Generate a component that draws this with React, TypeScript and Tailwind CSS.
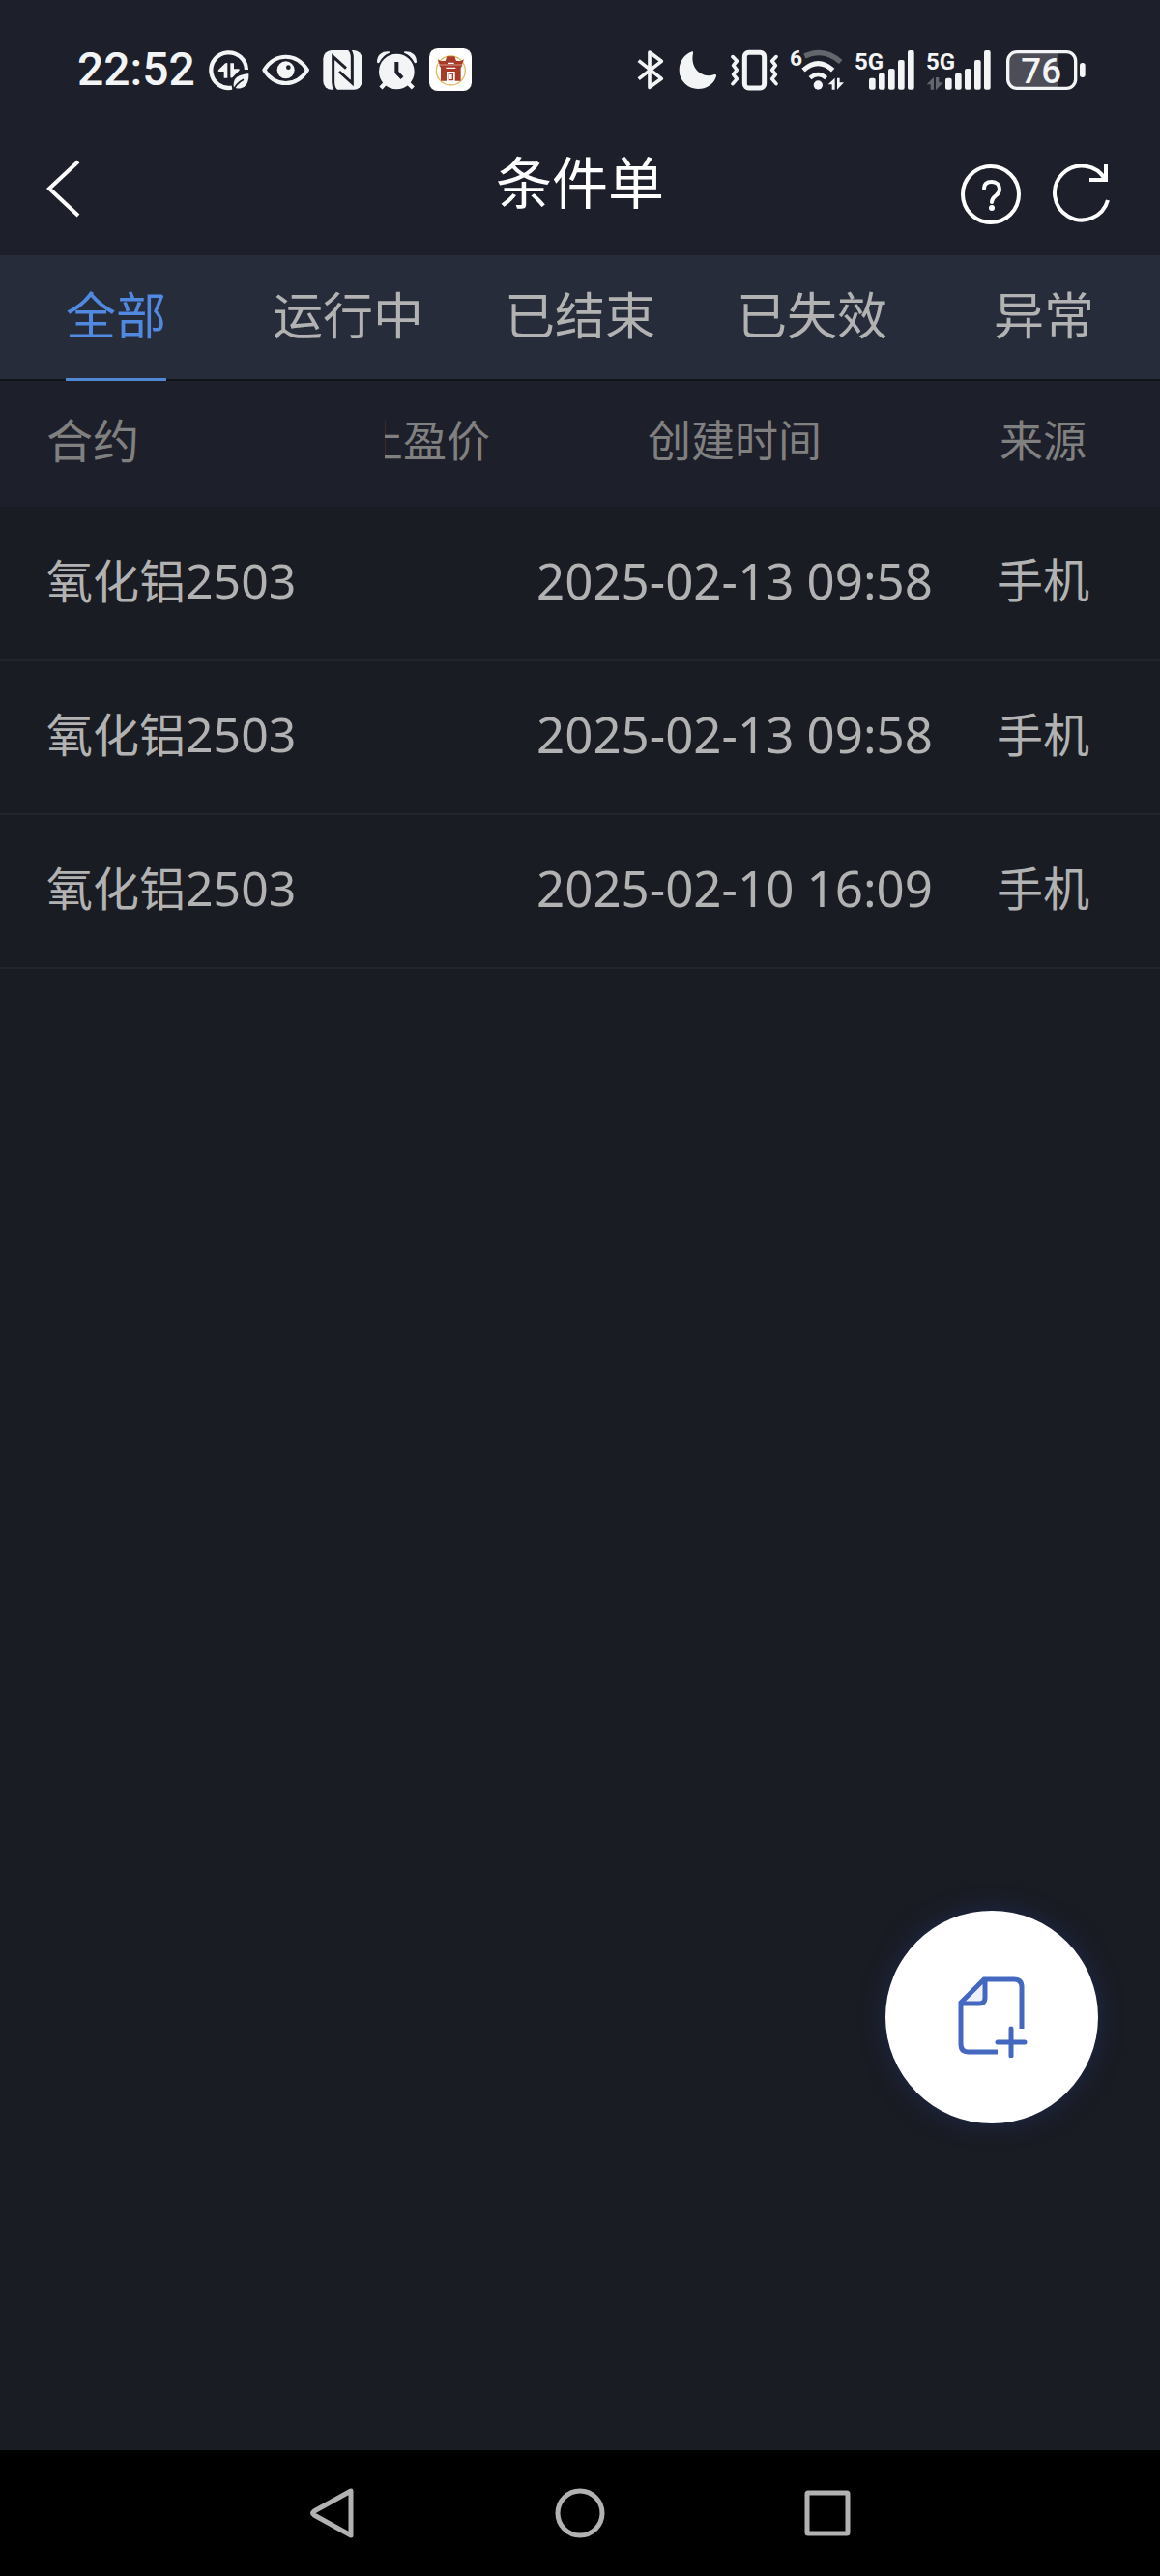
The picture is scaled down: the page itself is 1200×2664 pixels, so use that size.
import { useState } from "react";

type Order = {
  id: number;
  name: string;
  code: string;
  takeProfit: string;
  createdAt: string;
  source: string;
};

const TABS = ["全部", "运行中", "已结束", "已失效", "异常"];

const ORDERS: Order[] = [
  { id: 1, name: "氧化铝", code: "2503", takeProfit: "", createdAt: "2025-02-13 09:58", source: "手机" },
  { id: 2, name: "氧化铝", code: "2503", takeProfit: "", createdAt: "2025-02-13 09:58", source: "手机" },
  { id: 3, name: "氧化铝", code: "2503", takeProfit: "", createdAt: "2025-02-10 16:09", source: "手机" },
];

const INK = "#f3f4f5";
const BAR = "#1d1f2a";
const DIM = "#64666d";

function DataSaverIcon() {
  return (
    <svg className="h-11 w-[42px]" viewBox="0 0 126 132" fill="none" aria-hidden="true">
      <path d="M117 66A55 55 0 1 0 72 122" stroke={INK} strokeWidth="13" />
      <path d="M58 46V92H47V72H31Q27 70 30 67L50 47Q54 44 58 46Z" fill={INK} />
      <path d="M67 46H78V64H94Q97 66 94 69L74 90Q68 94 67 88Z" fill={INK} />
      <path d="M78 122C72 92 92 80 124 79C126 108 112 128 86 124Z" fill={INK} />
      <path d="M74 132L86 114Q94 104 108 97" stroke={BAR} strokeWidth="5" />
    </svg>
  );
}

function EyeIcon() {
  return (
    <svg className="h-11 w-[52px]" viewBox="0 0 156 132" fill="none" aria-hidden="true">
      <path
        d="M10 67C28 38 52 26 77 26S126 38 144 67C126 96 102 108 77 108S28 96 10 67Z"
        stroke={INK}
        strokeWidth="12"
        strokeLinejoin="round"
      />
      <circle cx="77" cy="67" r="27" fill={INK} />
      <circle cx="85" cy="59" r="7" fill={BAR} />
    </svg>
  );
}

function NfcIcon() {
  return (
    <svg className="h-11 w-[42px]" viewBox="0 0 126 132" fill="none" aria-hidden="true">
      <rect x="1" y="6" width="121" height="122" rx="26" fill={INK} />
      <path d="M42 132Q32 122 32 106V26L72 62" stroke={BAR} strokeWidth="9" />
      <path d="M81 2Q91 12 91 28V108L51 72" stroke={BAR} strokeWidth="9" />
    </svg>
  );
}

function AlarmIcon() {
  return (
    <svg className="h-11 w-11" viewBox="0 0 132 132" fill="none" aria-hidden="true">
      <circle cx="67" cy="72" r="55" fill={INK} />
      <path d="M8 42C8 22 22 10 44 12Q22 20 12 42Q10 46 8 42Z" fill={INK} stroke={INK} strokeWidth="4" />
      <path d="M127 42C127 22 113 10 91 12Q113 20 123 42Q125 46 127 42Z" fill={INK} stroke={INK} strokeWidth="4" />
      <path d="M32 108L18 123M103 108L118 123" stroke={INK} strokeWidth="13" />
      <path d="M67 42V74L84 92" stroke={BAR} strokeWidth="12" />
    </svg>
  );
}

function TempleIcon() {
  return (
    <svg className="h-11 w-11" viewBox="0 0 132 132" fill="none" aria-hidden="true">
      <rect width="132" height="132" rx="26" fill="#fff" />
      <circle cx="67" cy="69" r="45" stroke="#e3b95a" strokeWidth="4" />
      <path d="M26 34L36 39H50L55 25H79L84 39H98L108 34L102 50H32Z" fill="#a83a28" />
      <path d="M30 52H104L98 60V101H80V72H54V101H36V60Z" fill="#a83a28" />
      <path d="M57 46H77M52 61H82" stroke="#fff" strokeWidth="4" />
      <path d="M61 98V78H73V98Z" stroke="#a83a28" strokeWidth="4" />
    </svg>
  );
}

function BluetoothIcon() {
  return (
    <svg className="h-11 w-8" viewBox="0 0 96 132" fill="none" aria-hidden="true">
      <path
        d="M5 38L76 94L39 121V12L76 40L5 95"
        stroke={INK}
        strokeWidth="11"
        strokeLinejoin="round"
      />
    </svg>
  );
}

function MoonIcon() {
  return (
    <svg className="h-11 w-[42px]" viewBox="0 0 126 132" aria-hidden="true">
      <path
        d="M45 10C20 18 5 42 5 68A58 58 0 0 0 63 126C89 126 114 110 120 86C121 80 116 80 112 82C74 94 38 62 48 16C49 11 48 9 45 10Z"
        fill={INK}
      />
    </svg>
  );
}

function VibrateIcon() {
  return (
    <svg className="h-11 w-[54px]" viewBox="0 0 162 132" fill="none" aria-hidden="true">
      <rect x="52" y="13" width="61" height="110" rx="13" stroke={INK} strokeWidth="15" />
      <path
        d="M15 26L28 39L17 53L28 67L17 81L28 95L15 110"
        stroke={INK}
        strokeWidth="11"
        strokeLinecap="round"
        strokeLinejoin="round"
      />
      <path
        d="M150 26L137 39L148 53L137 67L148 81L137 95L150 110"
        stroke={INK}
        strokeWidth="11"
        strokeLinecap="round"
        strokeLinejoin="round"
      />
    </svg>
  );
}

function WifiIcon() {
  return (
    <svg className="h-11 w-[57px] overflow-visible" viewBox="0 0 171 132" fill="none" aria-hidden="true">
      <text x="0" y="54" fontSize="68" fontWeight="700" fontFamily="Roboto, sans-serif" fill={INK}>
        6
      </text>
      <path d="M46 24Q106 -4 158 42" stroke={DIM} strokeWidth="16" />
      <path d="M42 68Q88 26 134 68" stroke={INK} strokeWidth="15" />
      <path d="M63 92Q88 70 113 92" stroke={INK} strokeWidth="13" />
      <circle cx="88" cy="114" r="14" fill={INK} />
      <path d="M140 92V128H131V112H119Z" fill={INK} />
      <path d="M147 92H155V106H168L147 128Z" fill={INK} />
    </svg>
  );
}

function SignalBars({ x }: { x: number }) {
  return (
    <>
      <rect x={x} y="92" width="20" height="36" rx="6" fill={INK} />
      <rect x={x + 30} y="77" width="20" height="51" rx="6" fill={INK} />
      <rect x={x + 60} y="63" width="20" height="65" rx="6" fill={INK} />
      <rect x={x + 90} y="36" width="20" height="92" rx="6" fill={INK} />
      <rect x={x + 120} y="6" width="20" height="122" rx="6" fill={INK} />
    </>
  );
}

function SignalIcon() {
  return (
    <svg className="h-11 w-16 overflow-visible" viewBox="0 0 192 132" aria-hidden="true">
      <text x="0" y="66" fontSize="72" fontWeight="700" fontFamily="Roboto, sans-serif" fill={INK}>
        5G
      </text>
      <SignalBars x={45} />
    </svg>
  );
}

function IdleSignalIcon() {
  return (
    <svg className="h-11 w-[73px] overflow-visible" viewBox="0 0 219 132" aria-hidden="true">
      <text x="0" y="66" fontSize="72" fontWeight="700" fontFamily="Roboto, sans-serif" fill={INK}>
        5G
      </text>
      <path d="M24 90V128H14V112H2Z" fill={DIM} />
      <path d="M30 90H40V106H53L30 130Z" fill={DIM} />
      <SignalBars x={60} />
    </svg>
  );
}

function BatteryIcon() {
  return (
    <svg className="h-11 w-[82px]" viewBox="0 0 246 132" fill="none" aria-hidden="true">
      <path d="M159 14V120H32Q8 120 8 96V38Q8 14 32 14Z" fill="#4c4d56" />
      <rect x="5" y="11" width="210" height="113" rx="28" stroke={INK} strokeWidth="10" />
      <rect x="228" y="45" width="17" height="45" rx="8" fill={INK} />
      <text x="46" y="107" fontSize="110" fontWeight="500" fontFamily="Roboto, sans-serif" fill={INK}>
        76
      </text>
    </svg>
  );
}

function StatusBar() {
  return (
    <div className="flex h-[130px] items-center justify-between pt-[14px] pr-[77px] pl-20">
      <div className="flex items-center gap-3">
        <span className="w-[124px] font-[Roboto,sans-serif] text-[48px] leading-none font-medium text-[#f3f4f5]">
          22:52
        </span>
        <DataSaverIcon />
        <EyeIcon />
        <NfcIcon />
        <AlarmIcon />
        <TempleIcon />
      </div>
      <div className="flex items-center gap-[10px]">
        <BluetoothIcon />
        <MoonIcon />
        <VibrateIcon />
        <WifiIcon />
        <SignalIcon />
        <IdleSignalIcon />
        <BatteryIcon />
      </div>
    </div>
  );
}

function TitleBar() {
  return (
    <header className="grid h-[134px] grid-cols-[1fr_auto_1fr] items-center">
      <div className="pb-1 pl-12">
        <button type="button" aria-label="返回" className="block">
          <svg className="h-[60px] w-9" viewBox="0 0 36 60" fill="none" aria-hidden="true">
            <path d="M33 2L3 30L33 58" stroke="#fff" strokeWidth="4" />
          </svg>
        </button>
      </div>
      <h1 className="pb-4 text-[58px] leading-none text-white">条件单</h1>
      <div className="flex justify-end gap-8 pt-2 pr-[52px]">
        <button type="button" aria-label="帮助">
          <svg className="h-[62px] w-[62px]" viewBox="0 0 62 62" fill="none" aria-hidden="true">
            <circle cx="31" cy="31" r="29" stroke="#fff" strokeWidth="4" />
            <path
              d="M24 25C24 20 27 18 32 18S40 21 40 26C40 33 32 32 32 39"
              stroke="#fff"
              strokeWidth="4"
              strokeLinecap="round"
            />
            <circle cx="32" cy="45" r="3" fill="#fff" />
          </svg>
        </button>
        <button type="button" aria-label="刷新">
          <svg className="h-[62px] w-[60px]" viewBox="0 0 60 62" fill="none" aria-hidden="true">
            <path d="M55 15A28 28 0 1 0 58 37" stroke="#fff" strokeWidth="4" />
            <path d="M56 0V16H39" stroke="#fff" strokeWidth="4" />
          </svg>
        </button>
      </div>
    </header>
  );
}

function Tabs() {
  const [active, setActive] = useState(0);

  return (
    <nav className="grid h-[130px] grid-cols-5 border-b-2 border-[#11131a] bg-[#262c3a]" aria-label="条件单状态">
      {TABS.map((tab, index) => (
        <button
          key={tab}
          type="button"
          onClick={() => setActive(index)}
          className={`flex justify-center text-[52px] leading-[124px] ${index === active ? "text-[#5188e0]" : "text-[#b2b2b2]"}`}
        >
          <span className={`h-[130px] ${index === active ? "border-b-3 border-[#5188d4]" : ""}`}>{tab}</span>
        </button>
      ))}
    </nav>
  );
}

function OrderTable() {
  return (
    <table className="w-full table-fixed text-center whitespace-nowrap">
      <colgroup>
        <col className="w-[398px]" />
        <col className="w-[152px]" />
        <col className="w-[420px]" />
        <col />
      </colgroup>
      <thead className="bg-[#1d1f2a] text-[45px] text-[#808080]">
        <tr className="h-[130px]">
          <th className="pb-1.5 pl-12 text-left text-[48px] font-normal">合约</th>
          {/* Scrolled column, its first character is partly hidden */}
          <th className="pb-1.5 font-normal">
            <div className="flex w-[109px] justify-end overflow-hidden">
              <span>止盈价</span>
            </div>
          </th>
          <th className="pb-1.5 font-normal">创建时间</th>
          <th className="pr-3 pb-1.5 font-normal">来源</th>
        </tr>
      </thead>
      <tbody className="text-[48px] text-[#b2b2b2]">
        {ORDERS.map((order) => (
          <tr key={order.id} className="h-[159px] border-b-2 border-[#22252e]">
            <td className="pb-1.5 pl-12 text-left">
              {order.name}
              <span className="text-[50px]">{order.code}</span>
            </td>
            <td>{order.takeProfit}</td>
            <td className="pb-1.5 text-[51px]">{order.createdAt}</td>
            <td className="pr-3 pb-1.5">{order.source}</td>
          </tr>
        ))}
      </tbody>
    </table>
  );
}

function AddButton() {
  return (
    <button
      type="button"
      aria-label="新建条件单"
      className="absolute right-16 bottom-[338px] flex h-[220px] w-[220px] items-center justify-center rounded-full bg-white shadow-[0_0_24px_#1d2a4a]"
    >
      <svg className="h-[84px] w-[74px]" viewBox="0 0 74 84" fill="none" aria-hidden="true">
        <path d="M5 27L29 3V22Q29 27 24 27Z" fill="#eef1f9" />
        <path
          d="M68 54V11Q68 3 60 3H29L5 27V70Q5 78 13 78H43"
          stroke="#4468c0"
          strokeWidth="5"
        />
        <path d="M30 4V22Q30 28 24 28H5" stroke="#4468c0" strokeWidth="5" />
        <path d="M57 54V82M43 68H71" stroke="#4468c0" strokeWidth="5" strokeLinecap="round" />
      </svg>
    </button>
  );
}

function SystemNav() {
  return (
    <nav className="grid h-[130px] grid-cols-3 place-items-center bg-black px-[216px]" aria-label="系统导航">
      <button type="button" aria-label="后退">
        <svg className="h-[52px] w-[46px]" viewBox="0 0 46 52" fill="none" aria-hidden="true">
          <path d="M42 3V49L4 28Q1 26 4 24Z" stroke="#b2b2b2" strokeWidth="5" strokeLinejoin="round" />
        </svg>
      </button>
      <button type="button" aria-label="主屏幕">
        <svg className="h-[52px] w-[52px]" viewBox="0 0 52 52" fill="none" aria-hidden="true">
          <circle cx="26" cy="26" r="23" stroke="#b2b2b2" strokeWidth="5" />
        </svg>
      </button>
      <button type="button" aria-label="最近任务">
        <svg className="h-12 w-12" viewBox="0 0 48 48" fill="none" aria-hidden="true">
          <rect x="3" y="3" width="42" height="42" rx="1" stroke="#b2b2b2" strokeWidth="5" />
        </svg>
      </button>
    </nav>
  );
}

export default function App() {
  return (
    <div className="flex min-h-screen flex-col bg-[#1a1c24] font-['Noto_Sans','Noto_Sans_CJK_SC',sans-serif]">
      <div className="bg-[#1d1f2a]">
        <StatusBar />
        <TitleBar />
      </div>
      <main className="relative flex-1">
        <Tabs />
        <OrderTable />
        <AddButton />
      </main>
      <SystemNav />
    </div>
  );
}
